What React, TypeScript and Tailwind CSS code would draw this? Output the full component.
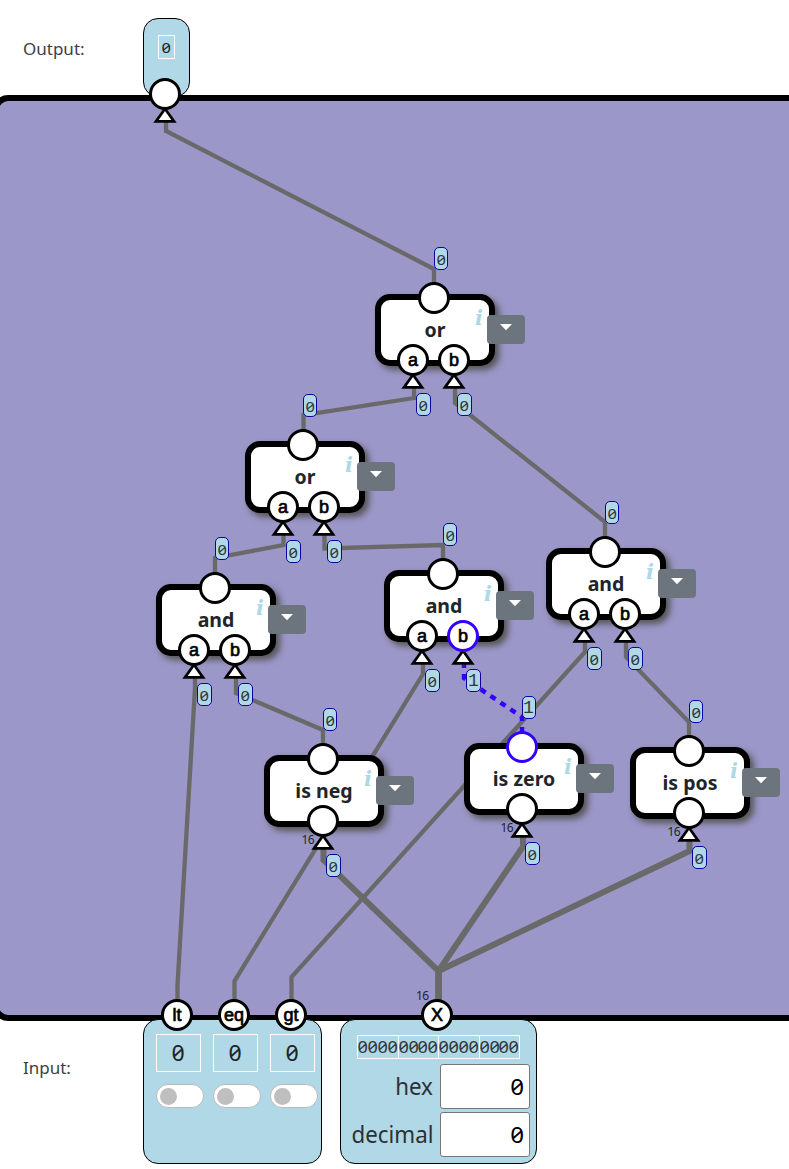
import React from "react";

type Gate = {
  id: string;
  label: string;
  x: number;
  y: number;
  topX?: number;
  inputs: { label: string; dx: number; active?: boolean; value?: string }[];
  wide?: boolean;
  active?: boolean;
};

const ab = [
  { label: "a", dx: 38 },
  { label: "b", dx: 79 },
];

const gates: Gate[] = [
  { id: "or1", label: "or", x: 375, y: 294, inputs: ab },
  { id: "or2", label: "or", x: 245, y: 441, topX: 58, inputs: ab },
  { id: "and1", label: "and", x: 156, y: 584, inputs: ab },
  {
    id: "and2",
    label: "and",
    x: 384,
    y: 570,
    inputs: [
      { label: "a", dx: 38 },
      { label: "b", dx: 79, active: true, value: "1" },
    ],
  },
  { id: "and3", label: "and", x: 546, y: 548, inputs: ab },
  { id: "neg", label: "is neg", x: 264, y: 755, wide: true, inputs: [{ label: "", dx: 59 }] },
  { id: "zero", label: "is zero", x: 464, y: 743, topX: 58, wide: true, active: true, inputs: [{ label: "", dx: 58 }] },
  { id: "pos", label: "is pos", x: 630, y: 747, wide: true, inputs: [{ label: "", dx: 59 }] },
];

const wires = [
  "166,118 166,131 434,269 434,290",
  "414,384 414,398 303.5,415 303.5,440",
  "455,384 455,403 605,522 605,545",
  "283.5,530 283.5,545 215,558 215,580",
  "324.5,530 324.5,548.5 443,545 443,565",
  "195,672 195,688 177.5,985 177.5,1010",
  "236,672 236,693 323,730 323,750",
  "423,658 423,674 234.5,981 234.5,1010",
  "585,636 585,652 291.5,977 291.5,1010",
  "626,636 626,657 689,722 689,740",
];

const buses = [
  "323.5,842 323.5,860 438.5,971 438.5,1010",
  "523,830 523,846.5 438.5,971 438.5,1010",
  "689.5,836 689.5,851 438.5,971 438.5,1010",
];

function Port({ label = "", active = false }: { label?: string; active?: boolean }) {
  return (
    <div
      className={`flex h-8 w-8 items-center justify-center rounded-full border-3 bg-white font-['Liberation_Sans',sans-serif] text-[18px] leading-none text-black [-webkit-text-stroke:0.7px_black] ${
        active ? "border-[#3300ff]" : "border-black"
      }`}
    >
      {label}
    </div>
  );
}

function Digit({ value }: { value: string }) {
  return value === "1" ? (
    <span className="inline-block scale-120 font-['Liberation_Mono',monospace]">1</span>
  ) : (
    <span className="inline-block scale-x-110 font-['Noto_Sans',sans-serif] slashed-zero">{value}</span>
  );
}

function Badge({ value, left, top }: { value: string; left: number; top: number }) {
  return (
    <div
      className="absolute flex h-[23px] w-[14.5px] items-center justify-center rounded-[5px] border border-[#1000a0] bg-[#b0d8e6] pt-px text-[15px] leading-none text-[#33383d]"
      style={{ left, top }}
    >
      <Digit value={value} />
    </div>
  );
}

function Arrow({ left, top }: { left: number; top: number }) {
  return (
    <svg className="absolute" style={{ left: left - 12, top: top + 12 }} width="24" height="18" viewBox="-12 12 24 18">
      <polygon points="0,12.5 -11.7,28.7 11.7,28.7" fill="black" />
      <polygon points="0,17 -6.3,26 6.3,26" fill="white" />
    </svg>
  );
}

function GateNode({ gate }: { gate: Gate }) {
  const topX = gate.topX ?? 59;
  return (
    <div className="absolute h-[72px] w-[120px]" style={{ left: gate.x, top: gate.y }}>
      <div className="flex h-full w-full items-center justify-center rounded-[15px] border-[6px] border-black bg-white font-['Noto_Sans',sans-serif] text-[19.5px] leading-none font-bold text-[#212529] shadow-[4px_4px_6px_#555]">
        <span>{gate.label}</span>
      </div>
      <span className="absolute top-[11px] left-[100px] font-['DejaVu_Serif',serif] text-[21px] leading-[26px] font-bold text-[#add8e6] italic">
        i
      </span>
      <button className="absolute top-[21px] left-28 flex h-[29px] w-[38px] justify-center rounded bg-[#6c757d] pt-[9px]">
        <svg width="12" height="7" viewBox="0 0 12 7">
          <polygon points="0,0 12,0 6,6.3" fill="white" />
        </svg>
      </button>
      {gate.inputs.map((input) => (
        <React.Fragment key={input.dx}>
          <Arrow left={input.dx} top={66} />
          <div className="absolute top-[50px]" style={{ left: input.dx - 16 }}>
            <Port label={input.label} active={input.active} />
          </div>
          <Badge value={input.value ?? "0"} left={input.dx + 3} top={99} />
        </React.Fragment>
      ))}
      <div className="absolute -top-3" style={{ left: topX - 16 }}>
        <Port active={gate.active} />
      </div>
      <Badge value={gate.active ? "1" : "0"} left={topX - 0.3} top={-47} />
      {gate.wide && (
        <span className="absolute top-[79px] font-['Noto_Sans',sans-serif] text-[12px] leading-[12px] tracking-[-0.5px] text-[#212529]" style={{ left: topX - 21.5 }}>
          16
        </span>
      )}
    </div>
  );
}

function BitInput() {
  return (
    <div className="flex w-12 flex-col gap-3">
      <div className="flex h-[38px] w-[45px] items-center justify-center border border-white pt-px text-[21px] leading-none">
        <Digit value="0" />
      </div>
      <div className="flex h-6 w-12 items-center rounded-full border border-[#bbb] bg-white pl-[3px]">
        <div className="h-[17px] w-[17px] rounded-full bg-[#bfbfbf]" />
      </div>
    </div>
  );
}

function NumberField({ label }: { label: string }) {
  return (
    <label className="flex items-center justify-end gap-[7px]">
      <span className="origin-right scale-x-97 text-[23px] leading-none text-[#2b3035]">{label}</span>
      <span className="flex h-[45px] w-[90px] items-center justify-end rounded-[3px] border border-[#767676] bg-white pr-[5px] pb-px text-[22px] leading-none text-black">
        <Digit value="0" />
      </span>
    </label>
  );
}

const terminals = [
  { label: "lt", x: 177 },
  { label: "eq", x: 234 },
  { label: "gt", x: 291 },
  { label: "X", x: 437 },
];

export default function App() {
  return (
    <main className="relative flex h-[1169px] w-[789px] flex-col overflow-hidden bg-white font-['Noto_Sans',sans-serif] text-[#212529]">
      <header className="flex h-[95px] shrink-0 items-start pt-[18px]">
        <span className="w-[143px] pt-[21px] pl-[23px] text-[17px] leading-5 text-[#3a3f44]">Output:</span>
        <div className="flex h-[79px] w-[47px] shrink-0 justify-center rounded-[15px] border border-black bg-[#b0d8e6] pt-4">
          <div className="flex h-6 w-[17px] items-center justify-center border border-white text-[15px] leading-none">
            <Digit value="0" />
          </div>
        </div>
      </header>

      <section className="relative -ml-[7px] h-[926px] w-[820px] shrink-0 rounded-[15px] border-[6px] border-black bg-[#9b97c8]" />

      <footer className="relative -mt-0.5 flex h-[145px] shrink-0 items-start">
        <span className="w-[143px] shrink-0 pt-[39px] pl-[23px] text-[17px] leading-5 text-[#3a3f44]">Input:</span>
        <div className="flex h-[145px] w-[179px] shrink-0 gap-[9px] rounded-[15px] border border-black bg-[#b0d8e6] pt-3.5 pl-3">
          <BitInput />
          <BitInput />
          <BitInput />
        </div>
        <div className="ml-[18px] flex h-[145px] w-[197px] shrink-0 flex-col rounded-[15px] border border-black bg-[#b0d8e6] pt-[15px] pr-1.5">
          <div className="ml-4 flex h-6 w-[163px] shrink-0 items-center border border-white text-[16.5px] leading-none text-[#33383d]">
            {[0, 1, 2, 3].map((i) => (
              <div key={i} className={`flex h-full flex-1 items-center justify-center gap-[0.4px] ${i > 0 ? "border-l border-white" : ""}`}>
                {[0, 1, 2, 3].map((j) => (
                  <Digit key={j} value="0" />
                ))}
              </div>
            ))}
          </div>
          <div className="mt-[5px] flex flex-col gap-[3px]">
            <NumberField label="hex" />
            <NumberField label="decimal" />
          </div>
        </div>
      </footer>

      <div className="absolute inset-0">
        <svg className="absolute inset-0" width="789" height="1169" fill="none" stroke="#696969">
          {wires.map((points) => (
            <polyline key={points} points={points} strokeWidth="4.3" />
          ))}
          {buses.map((points) => (
            <polyline key={points} points={points} strokeWidth="6" />
          ))}
          <polyline points="464,662 464,678 522,717 522,735" stroke="#3300ff" strokeWidth="4.5" strokeDasharray="6 6" />
        </svg>
        {gates.map((gate) => (
          <GateNode key={gate.id} gate={gate} />
        ))}
        <Arrow left={165} top={94} />
        <div className="absolute top-[78px] left-[149px]">
          <Port />
        </div>
        {terminals.map((t) => (
          <div key={t.label} className="absolute top-[999px]" style={{ left: t.x - 16 }}>
            <Port label={t.label} />
          </div>
        ))}
        <span className="absolute top-[990px] left-[416px] text-[12px] leading-[12px] tracking-[-0.5px]">16</span>
      </div>
    </main>
  );
}
